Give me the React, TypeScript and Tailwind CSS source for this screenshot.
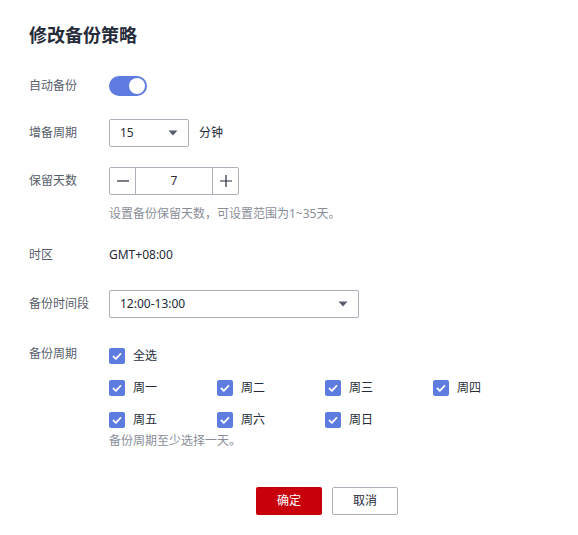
import { useState } from 'react'

const font = { fontFamily: '"Noto Sans", "Noto Sans CJK SC", sans-serif' }

function Caret() {
  return (
    <svg width="10" height="6" viewBox="0 0 10 6" className="shrink-0">
      <path d="M0.5 0.5h9L5 5.5z" fill="#575d6c" />
    </svg>
  )
}

function Check({ label }: { label: string }) {
  return (
    <label className="flex items-center h-5 gap-2 text-xs text-[#252b3a]">
      <span className="w-4 h-4 rounded-[2px] bg-[#5e7ce0] flex items-center justify-center">
        <svg width="10" height="8" viewBox="0 0 10 8">
          <path d="M1 4l2.8 2.8L9 1.4" stroke="#fff" strokeWidth="1.8" fill="none" />
        </svg>
      </span>
      {label}
    </label>
  )
}

function Row({ label, children, className = '' }: { label: string; children: React.ReactNode; className?: string }) {
  return (
    <div className={`flex items-center ${className}`}>
      <div className="w-20 shrink-0 text-xs text-[#575d6c]">{label}</div>
      {children}
    </div>
  )
}

export default function App() {
  const [on, setOn] = useState(true)
  const days = ['周一', '周二', '周三', '周四', '周五', '周六', '周日']

  return (
    <div className="w-[578px] h-[535px] bg-white pl-[29px] pt-[22px]" style={font}>
      <h1 className="text-lg leading-[26px] font-bold text-[#252b3a]">修改备份策略</h1>

      {/* auto backup */}
      <Row label="自动备份" className="mt-[28px] h-5">
        <button
          onClick={() => setOn(!on)}
          className="w-[38px] h-5 rounded-full bg-[#5e7ce0] flex items-center justify-end px-[2px]"
        >
          <span className="w-4 h-4 rounded-full bg-white" />
        </button>
      </Row>

      {/* interval */}
      <Row label="增备周期" className="mt-[23px] h-7">
        <div className="w-20 h-7 border border-[#adb0b8] rounded-[2px] flex items-center justify-between pl-[10px] pr-[10px] text-xs text-[#252b3a]">
          <span>15</span>
          <Caret />
        </div>
        <span className="ml-[10px] text-xs text-[#252b3a]">分钟</span>
      </Row>

      {/* retention */}
      <Row label="保留天数" className="mt-5 h-7">
        <div className="flex h-7 w-[130px] border border-[#adb0b8] rounded-[2px] text-[#252b3a]">
          <div className="w-[26px] flex items-center justify-center border-r border-[#adb0b8]">
            <svg width="12" height="12" viewBox="0 0 12 12">
              <path d="M0 6h12" stroke="#252b3a" strokeWidth="1.2" />
            </svg>
          </div>
          <div className="flex-1 flex items-center justify-center text-xs">7</div>
          <div className="w-[26px] flex items-center justify-center border-l border-[#adb0b8]">
            <svg width="12" height="12" viewBox="0 0 12 12">
              <path d="M0 6h12M6 0v12" stroke="#252b3a" strokeWidth="1.2" />
            </svg>
          </div>
        </div>
      </Row>
      <div className="mt-[10px] pl-20 text-xs leading-[18px] text-[#8a8e99]">
        设置备份保留天数，可设置范围为1~35天。
      </div>

      {/* timezone */}
      <Row label="时区" className="mt-[22px] h-5">
        <span className="text-xs text-[#252b3a]">GMT+08:00</span>
      </Row>

      {/* window */}
      <Row label="备份时间段" className="mt-[25px] h-7">
        <div className="w-[250px] h-7 border border-[#adb0b8] rounded-[2px] flex items-center justify-between pl-[10px] pr-[10px] text-xs text-[#252b3a]">
          <span>12:00-13:00</span>
          <Caret />
        </div>
      </Row>

      {/* period */}
      <div className="mt-[28px] flex">
        <div className="w-20 shrink-0 text-xs leading-5 text-[#575d6c] -mt-[2px]">备份周期</div>
        <div>
          <Check label="全选" />
          <div className="mt-3 grid grid-cols-[108px_108px_108px_108px] gap-y-3">
            {days.map(d => (
              <Check key={d} label={d} />
            ))}
          </div>
          <div className="mt-[2px] text-xs leading-[18px] text-[#8a8e99]">备份周期至少选择一天。</div>
        </div>
      </div>

      {/* actions */}
      <div className="mt-[37px] flex gap-[10px] pl-[227px]">
        <button className="w-[66px] h-7 rounded-[2px] bg-[#c7000b] text-white text-xs">确定</button>
        <button className="w-[66px] h-7 rounded-[2px] border border-[#adb0b8] bg-white text-[#252b3a] text-xs">取消</button>
      </div>
    </div>
  )
}
